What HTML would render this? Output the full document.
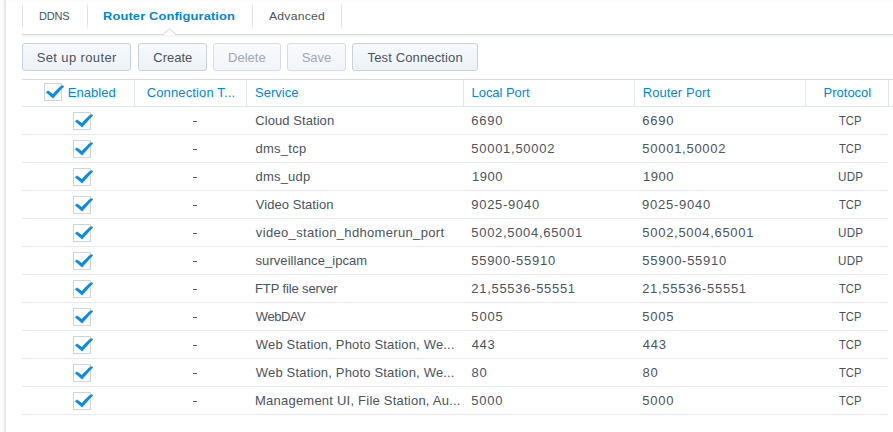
<!DOCTYPE html>
<html><head><meta charset="utf-8"><title>Router Configuration</title>
<style>
html,body{margin:0;padding:0;}
body{width:893px;height:432px;position:relative;overflow:hidden;background:#fff;font-family:"Liberation Sans",sans-serif;}
.t{position:absolute;white-space:nowrap;transform-origin:0 0;line-height:16px;font-family:"Liberation Sans",sans-serif;}
.ck{position:absolute;overflow:visible;}
.topband{position:absolute;left:0;top:0;width:893px;height:2px;background:#fbfcfe;}
.leftband{position:absolute;left:0;top:0;width:6px;height:432px;background:linear-gradient(to right,#fdfdfd 0px,#fdfdfd 2px,#f9f9f9 3px,#f3f3f3 4px,#e8e8e8 5px,#e4e4e4 6px);}
.tsep{position:absolute;top:4px;width:1px;height:24px;background:linear-gradient(to bottom,#eceff2,#dde1e6 20%,#dde1e6 80%,#eceff2);}
.tabline{position:absolute;left:22px;top:34px;width:871px;height:1px;background:#d8d9db;}
.tabshadow{position:absolute;left:22px;top:35px;width:871px;height:3px;background:linear-gradient(to bottom,#f0f1f2,#ffffff);}
.btn{position:absolute;top:43px;height:28px;box-sizing:border-box;border:1px solid #c9d2dc;border-radius:3px;background:linear-gradient(to bottom,#f6fafe,#edf2f7);}
.btn.dis{border-color:#d7dde6;background:linear-gradient(to bottom,#f8fafd,#f2f5f9);}
.hl{position:absolute;left:22px;width:871px;height:1px;background:#dbe3ec;}
.hsep{position:absolute;top:80px;width:1px;height:26px;background:#dfe6ef;}
.rl{position:absolute;left:22px;width:866px;height:1px;background:#e8ecf2;}
.dash{position:absolute;left:193px;width:4px;height:1px;background:#555d66;}
</style></head><body>
<div class="topband"></div>
<div class="leftband"></div>
<div class="tsep" style="left:22px"></div>
<div class="tsep" style="left:87px"></div>
<div class="tsep" style="left:252px"></div>
<div class="tsep" style="left:341px"></div>
<div class="tabline"></div>
<div class="tabshadow"></div>
<svg style="position:absolute;left:160.4px;top:26.2px" width="20" height="12" viewBox="0 0 20 12"><path d="M3 9 L9.5 2.5 L16 9 Z" fill="#fff"/><path d="M3 8.5 L9.5 2.5 L16 8.5" fill="none" stroke="#d0d1d3" stroke-width="1"/></svg>
<div class="btn" style="left:22px;width:109px"></div>
<div class="btn" style="left:138px;width:69px"></div>
<div class="btn dis" style="left:213px;width:68px"></div>
<div class="btn dis" style="left:287px;width:59px"></div>
<div class="btn" style="left:352px;width:126px"></div>
<div class="hl" style="top:79px;background:#d3dce8"></div>
<div class="hl" style="top:106px;background:#e3e8ee"></div>
<div class="hsep" style="left:134px"></div>
<div class="hsep" style="left:246px"></div>
<div class="hsep" style="left:463px"></div>
<div class="hsep" style="left:634px"></div>
<div class="hsep" style="left:805px"></div>
<div class="hsep" style="left:888px"></div>
<div class="rl" style="top:134px"></div>
<div class="rl" style="top:162px"></div>
<div class="rl" style="top:190px"></div>
<div class="rl" style="top:218px"></div>
<div class="rl" style="top:246px"></div>
<div class="rl" style="top:274px"></div>
<div class="rl" style="top:302px"></div>
<div class="rl" style="top:330px"></div>
<div class="rl" style="top:358px"></div>
<div class="rl" style="top:386px"></div>
<div class="rl" style="top:414px"></div>
<div class="dash" style="top:121px"></div>
<div class="dash" style="top:149px"></div>
<div class="dash" style="top:177px"></div>
<div class="dash" style="top:205px"></div>
<div class="dash" style="top:233px"></div>
<div class="dash" style="top:261px"></div>
<div class="dash" style="top:289px"></div>
<div class="dash" style="top:317px"></div>
<div class="dash" style="top:345px"></div>
<div class="dash" style="top:373px"></div>
<div class="dash" style="top:401px"></div>
<svg class="ck" style="left:44px;top:83px" width="22" height="18" viewBox="0 0 22 18"><rect x="0.5" y="0.5" width="17" height="17" fill="#fff" stroke="#cfd5dd"/><path d="M1.9 9.3 L4.1 7.6 L8.8 11.1 C11.8 7.3 14.8 4.5 18.0 2.2 L20.1 3.0 L19.5 4.2 C16 7.5 12.5 11.5 9.1 15.6 Z" fill="#0a8cea"/></svg>
<svg class="ck" style="left:73px;top:112px" width="22" height="18" viewBox="0 0 22 18"><rect x="0.5" y="0.5" width="17" height="17" fill="#fff" stroke="#cfd5dd"/><path d="M1.9 9.3 L4.1 7.6 L8.8 11.1 C11.8 7.3 14.8 4.5 18.0 2.2 L20.1 3.0 L19.5 4.2 C16 7.5 12.5 11.5 9.1 15.6 Z" fill="#0a8cea"/></svg>
<svg class="ck" style="left:73px;top:140px" width="22" height="18" viewBox="0 0 22 18"><rect x="0.5" y="0.5" width="17" height="17" fill="#fff" stroke="#cfd5dd"/><path d="M1.9 9.3 L4.1 7.6 L8.8 11.1 C11.8 7.3 14.8 4.5 18.0 2.2 L20.1 3.0 L19.5 4.2 C16 7.5 12.5 11.5 9.1 15.6 Z" fill="#0a8cea"/></svg>
<svg class="ck" style="left:73px;top:168px" width="22" height="18" viewBox="0 0 22 18"><rect x="0.5" y="0.5" width="17" height="17" fill="#fff" stroke="#cfd5dd"/><path d="M1.9 9.3 L4.1 7.6 L8.8 11.1 C11.8 7.3 14.8 4.5 18.0 2.2 L20.1 3.0 L19.5 4.2 C16 7.5 12.5 11.5 9.1 15.6 Z" fill="#0a8cea"/></svg>
<svg class="ck" style="left:73px;top:196px" width="22" height="18" viewBox="0 0 22 18"><rect x="0.5" y="0.5" width="17" height="17" fill="#fff" stroke="#cfd5dd"/><path d="M1.9 9.3 L4.1 7.6 L8.8 11.1 C11.8 7.3 14.8 4.5 18.0 2.2 L20.1 3.0 L19.5 4.2 C16 7.5 12.5 11.5 9.1 15.6 Z" fill="#0a8cea"/></svg>
<svg class="ck" style="left:73px;top:224px" width="22" height="18" viewBox="0 0 22 18"><rect x="0.5" y="0.5" width="17" height="17" fill="#fff" stroke="#cfd5dd"/><path d="M1.9 9.3 L4.1 7.6 L8.8 11.1 C11.8 7.3 14.8 4.5 18.0 2.2 L20.1 3.0 L19.5 4.2 C16 7.5 12.5 11.5 9.1 15.6 Z" fill="#0a8cea"/></svg>
<svg class="ck" style="left:73px;top:252px" width="22" height="18" viewBox="0 0 22 18"><rect x="0.5" y="0.5" width="17" height="17" fill="#fff" stroke="#cfd5dd"/><path d="M1.9 9.3 L4.1 7.6 L8.8 11.1 C11.8 7.3 14.8 4.5 18.0 2.2 L20.1 3.0 L19.5 4.2 C16 7.5 12.5 11.5 9.1 15.6 Z" fill="#0a8cea"/></svg>
<svg class="ck" style="left:73px;top:280px" width="22" height="18" viewBox="0 0 22 18"><rect x="0.5" y="0.5" width="17" height="17" fill="#fff" stroke="#cfd5dd"/><path d="M1.9 9.3 L4.1 7.6 L8.8 11.1 C11.8 7.3 14.8 4.5 18.0 2.2 L20.1 3.0 L19.5 4.2 C16 7.5 12.5 11.5 9.1 15.6 Z" fill="#0a8cea"/></svg>
<svg class="ck" style="left:73px;top:308px" width="22" height="18" viewBox="0 0 22 18"><rect x="0.5" y="0.5" width="17" height="17" fill="#fff" stroke="#cfd5dd"/><path d="M1.9 9.3 L4.1 7.6 L8.8 11.1 C11.8 7.3 14.8 4.5 18.0 2.2 L20.1 3.0 L19.5 4.2 C16 7.5 12.5 11.5 9.1 15.6 Z" fill="#0a8cea"/></svg>
<svg class="ck" style="left:73px;top:336px" width="22" height="18" viewBox="0 0 22 18"><rect x="0.5" y="0.5" width="17" height="17" fill="#fff" stroke="#cfd5dd"/><path d="M1.9 9.3 L4.1 7.6 L8.8 11.1 C11.8 7.3 14.8 4.5 18.0 2.2 L20.1 3.0 L19.5 4.2 C16 7.5 12.5 11.5 9.1 15.6 Z" fill="#0a8cea"/></svg>
<svg class="ck" style="left:73px;top:364px" width="22" height="18" viewBox="0 0 22 18"><rect x="0.5" y="0.5" width="17" height="17" fill="#fff" stroke="#cfd5dd"/><path d="M1.9 9.3 L4.1 7.6 L8.8 11.1 C11.8 7.3 14.8 4.5 18.0 2.2 L20.1 3.0 L19.5 4.2 C16 7.5 12.5 11.5 9.1 15.6 Z" fill="#0a8cea"/></svg>
<svg class="ck" style="left:73px;top:392px" width="22" height="18" viewBox="0 0 22 18"><rect x="0.5" y="0.5" width="17" height="17" fill="#fff" stroke="#cfd5dd"/><path d="M1.9 9.3 L4.1 7.6 L8.8 11.1 C11.8 7.3 14.8 4.5 18.0 2.2 L20.1 3.0 L19.5 4.2 C16 7.5 12.5 11.5 9.1 15.6 Z" fill="#0a8cea"/></svg>
<span class="t" style="left:38.99px;top:8.00px;font-size:11px;color:#4b535d;letter-spacing:-0.163px;">DDNS</span>
<span class="t" style="left:103.19px;top:8.00px;font-size:11.5px;color:#0086e5;letter-spacing:0.115px;font-weight:bold;transform:scaleX(1.12);">Router Configuration</span>
<span class="t" style="left:268.84px;top:8.00px;font-size:11.5px;color:#4b535d;letter-spacing:0.212px;transform:scaleX(1.06);">Advanced</span>
<span class="t" style="left:36.66px;top:50.00px;font-size:13px;color:#4b535d;letter-spacing:0.378px;">Set up router</span>
<span class="t" style="left:153.25px;top:50.00px;font-size:13px;color:#4b535d;letter-spacing:0.003px;">Create</span>
<span class="t" style="left:228.10px;top:50.00px;font-size:13px;color:#a0a8b4;letter-spacing:0.000px;">Delete</span>
<span class="t" style="left:301.69px;top:50.00px;font-size:13px;color:#a0a8b4;letter-spacing:-0.022px;">Save</span>
<span class="t" style="left:367.57px;top:50.00px;font-size:13px;color:#4b535d;letter-spacing:0.138px;">Test Connection</span>
<span class="t" style="left:67.76px;top:85.00px;font-size:13px;color:#0086e5;letter-spacing:0.062px;">Enabled</span>
<span class="t" style="left:146.66px;top:85.00px;font-size:13px;color:#0086e5;letter-spacing:0.135px;">Connection T...</span>
<span class="t" style="left:255.10px;top:85.00px;font-size:13px;color:#0086e5;letter-spacing:0.000px;">Service</span>
<span class="t" style="left:471.60px;top:85.00px;font-size:13px;color:#0086e5;letter-spacing:-0.068px;">Local Port</span>
<span class="t" style="left:642.66px;top:85.00px;font-size:13px;color:#0086e5;letter-spacing:0.096px;">Router Port</span>
<span class="t" style="left:823.59px;top:85.00px;font-size:13px;color:#0086e5;letter-spacing:-0.005px;">Protocol</span>
<span class="t" style="left:255.32px;top:113.00px;font-size:13px;color:#4b535d;letter-spacing:0.064px;">Cloud Station</span>
<span class="t" style="left:471.36px;top:113.00px;font-size:13px;color:#4b535d;letter-spacing:0.730px;">6690</span>
<span class="t" style="left:642.18px;top:113.00px;font-size:13px;color:#4b535d;letter-spacing:0.794px;">6690</span>
<span class="t" style="left:838.70px;top:113.00px;font-size:12.5px;color:#4b535d;letter-spacing:0.000px;transform:scaleX(0.9);">TCP</span>
<span class="t" style="left:255.41px;top:141.00px;font-size:13px;color:#4b535d;letter-spacing:0.264px;">dms_tcp</span>
<span class="t" style="left:471.31px;top:141.00px;font-size:13px;color:#4b535d;letter-spacing:0.725px;">50001,50002</span>
<span class="t" style="left:642.35px;top:141.00px;font-size:13px;color:#4b535d;letter-spacing:0.722px;">50001,50002</span>
<span class="t" style="left:838.70px;top:141.00px;font-size:12.5px;color:#4b535d;letter-spacing:0.000px;transform:scaleX(0.9);">TCP</span>
<span class="t" style="left:255.53px;top:169.00px;font-size:13px;color:#4b535d;letter-spacing:0.197px;">dms_udp</span>
<span class="t" style="left:472.05px;top:169.00px;font-size:13px;color:#4b535d;letter-spacing:0.470px;">1900</span>
<span class="t" style="left:643.11px;top:169.00px;font-size:13px;color:#4b535d;letter-spacing:0.497px;">1900</span>
<span class="t" style="left:837.81px;top:169.00px;font-size:12.5px;color:#4b535d;letter-spacing:0.308px;transform:scaleX(0.93);">UDP</span>
<span class="t" style="left:255.79px;top:197.00px;font-size:13px;color:#4b535d;letter-spacing:0.043px;">Video Station</span>
<span class="t" style="left:471.27px;top:197.00px;font-size:13px;color:#4b535d;letter-spacing:0.720px;">9025-9040</span>
<span class="t" style="left:642.01px;top:197.00px;font-size:13px;color:#4b535d;letter-spacing:0.766px;">9025-9040</span>
<span class="t" style="left:838.70px;top:197.00px;font-size:12.5px;color:#4b535d;letter-spacing:0.000px;transform:scaleX(0.9);">TCP</span>
<span class="t" style="left:255.84px;top:225.00px;font-size:13px;color:#4b535d;letter-spacing:0.333px;">video_station_hdhomerun_port</span>
<span class="t" style="left:471.31px;top:225.00px;font-size:13px;color:#4b535d;letter-spacing:0.686px;">5002,5004,65001</span>
<span class="t" style="left:642.35px;top:225.00px;font-size:13px;color:#4b535d;letter-spacing:0.707px;">5002,5004,65001</span>
<span class="t" style="left:837.81px;top:225.00px;font-size:12.5px;color:#4b535d;letter-spacing:0.308px;transform:scaleX(0.93);">UDP</span>
<span class="t" style="left:255.57px;top:253.00px;font-size:13px;color:#4b535d;letter-spacing:0.061px;">surveillance_ipcam</span>
<span class="t" style="left:471.25px;top:253.00px;font-size:13px;color:#4b535d;letter-spacing:0.726px;">55900-55910</span>
<span class="t" style="left:642.35px;top:253.00px;font-size:13px;color:#4b535d;letter-spacing:0.719px;">55900-55910</span>
<span class="t" style="left:837.81px;top:253.00px;font-size:12.5px;color:#4b535d;letter-spacing:0.308px;transform:scaleX(0.93);">UDP</span>
<span class="t" style="left:255.02px;top:281.00px;font-size:13px;color:#4b535d;letter-spacing:-0.117px;">FTP file server</span>
<span class="t" style="left:471.37px;top:281.00px;font-size:13px;color:#4b535d;letter-spacing:0.694px;">21,55536-55551</span>
<span class="t" style="left:642.18px;top:281.00px;font-size:13px;color:#4b535d;letter-spacing:0.706px;">21,55536-55551</span>
<span class="t" style="left:838.70px;top:281.00px;font-size:12.5px;color:#4b535d;letter-spacing:0.000px;transform:scaleX(0.9);">TCP</span>
<span class="t" style="left:255.82px;top:309.00px;font-size:13px;color:#4b535d;letter-spacing:-0.463px;">WebDAV</span>
<span class="t" style="left:471.31px;top:309.00px;font-size:13px;color:#4b535d;letter-spacing:0.851px;">5005</span>
<span class="t" style="left:642.35px;top:309.00px;font-size:13px;color:#4b535d;letter-spacing:0.698px;">5005</span>
<span class="t" style="left:838.70px;top:309.00px;font-size:12.5px;color:#4b535d;letter-spacing:0.000px;transform:scaleX(0.9);">TCP</span>
<span class="t" style="left:255.82px;top:337.00px;font-size:13px;color:#4b535d;letter-spacing:0.171px;">Web Station, Photo Station, We...</span>
<span class="t" style="left:471.75px;top:337.00px;font-size:13px;color:#4b535d;letter-spacing:0.631px;">443</span>
<span class="t" style="left:642.80px;top:337.00px;font-size:13px;color:#4b535d;letter-spacing:0.685px;">443</span>
<span class="t" style="left:838.70px;top:337.00px;font-size:12.5px;color:#4b535d;letter-spacing:0.000px;transform:scaleX(0.9);">TCP</span>
<span class="t" style="left:255.82px;top:365.00px;font-size:13px;color:#4b535d;letter-spacing:0.171px;">Web Station, Photo Station, We...</span>
<span class="t" style="left:471.40px;top:365.00px;font-size:13px;color:#4b535d;letter-spacing:0.882px;">80</span>
<span class="t" style="left:642.38px;top:365.00px;font-size:13px;color:#4b535d;letter-spacing:0.996px;">80</span>
<span class="t" style="left:838.70px;top:365.00px;font-size:12.5px;color:#4b535d;letter-spacing:0.000px;transform:scaleX(0.9);">TCP</span>
<span class="t" style="left:255.02px;top:393.00px;font-size:13px;color:#4b535d;letter-spacing:0.226px;">Management UI, File Station, Au...</span>
<span class="t" style="left:471.25px;top:393.00px;font-size:13px;color:#4b535d;letter-spacing:0.765px;">5000</span>
<span class="t" style="left:642.35px;top:393.00px;font-size:13px;color:#4b535d;letter-spacing:0.716px;">5000</span>
<span class="t" style="left:838.70px;top:393.00px;font-size:12.5px;color:#4b535d;letter-spacing:0.000px;transform:scaleX(0.9);">TCP</span>
</body></html>
